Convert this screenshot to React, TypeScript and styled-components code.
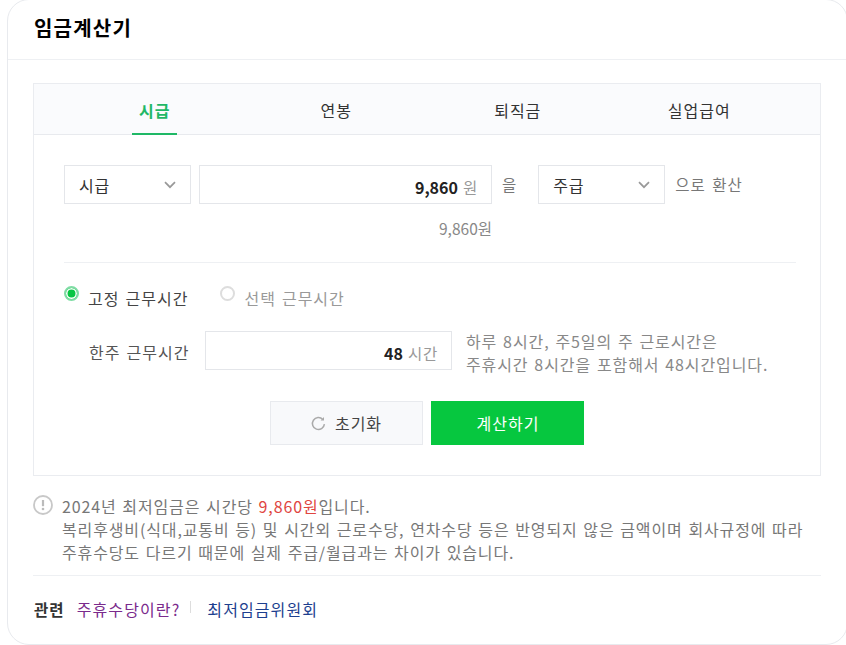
import styled, { createGlobalStyle } from 'styled-components';

const GlobalStyle = createGlobalStyle`
  html, body {
    margin: 0;
    padding: 0;
    background: #fff;
    overflow: hidden;
  }
  body {
    font-family: "Noto Sans CJK KR", "Noto Sans", sans-serif;
    font-size: 16px;
    color: #333;
  }
`;

const Card = styled.section`
  box-sizing: border-box;
  width: 841px;
  height: 646px;
  margin-left: 7px;
  margin-top: -1px;
  border: 1px solid #e8eaee;
  border-radius: 22px;
  background: #fff;
`;

const Header = styled.header`
  box-sizing: border-box;
  height: 60px;
  padding: 13px 26px 0;
  border-bottom: 1px solid #eef0f3;
`;

const Title = styled.h2`
  margin: 0;
  font-size: 20px;
  line-height: 30px;
  font-weight: 700;
  letter-spacing: 1.2px;
  color: #000;
`;

const Body = styled.div`
  padding: 23px 26px 0 25px;
`;

const Calc = styled.div`
  box-sizing: border-box;
  width: 788px;
  height: 393px;
  border: 1px solid #eaecf0;
`;

const Tabs = styled.div`
  display: grid;
  grid-template-columns: repeat(4, 181.5px);
  height: 51px;
  box-sizing: border-box;
  padding: 0 30px;
  background: #fafbfd;
  border-bottom: 1px solid #e8eaee;
`;

const Tab = styled.div`
  display: flex;
  justify-content: center;
`;

const TabLabel = styled.span<{ $active?: boolean }>`
  box-sizing: border-box;
  height: 51px;
  padding: 0 7px;
  min-width: 44px;
  text-align: center;
  line-height: 52px;
  font-size: 16px;
  letter-spacing: 1px;
  font-weight: ${(p) => (p.$active ? 700 : 400)};
  color: ${(p) => (p.$active ? '#1fb866' : '#333')};
  border-bottom: 2px solid ${(p) => (p.$active ? '#1fb866' : 'transparent')};
`;

const Panel = styled.div`
  padding: 30px 24px 0 30px;
`;

const ConvertRow = styled.div`
  display: flex;
  align-items: center;
  height: 39px;
`;

const Select = styled.div<{ $width: number; $gap?: number }>`
  box-sizing: border-box;
  display: flex;
  align-items: center;
  justify-content: space-between;
  width: ${(p) => p.$width}px;
  height: 39px;
  margin-right: ${(p) => p.$gap ?? 0}px;
  padding: 0 14px 0 14px;
  border: 1px solid #e4e6ea;
  font-size: 16px;
  letter-spacing: 0.8px;
  color: #333;
`;

const Field = styled.div<{ $width: number }>`
  box-sizing: border-box;
  display: flex;
  align-items: center;
  justify-content: flex-end;
  width: ${(p) => p.$width}px;
  height: 39px;
  padding: 5px 13px 0 0;
  border: 1px solid #e4e6ea;
`;

const Amount = styled.strong`
  font-size: 16px;
  font-weight: 700;
  color: #222;
`;

const Unit = styled.span`
  margin-left: 5px;
  font-size: 15.5px;
  letter-spacing: 0.8px;
  color: #999;
`;

const RowText = styled.span<{ $gap: number }>`
  margin: 0 ${(p) => p.$gap}px 0 10px;
  font-size: 15.5px;
  letter-spacing: 1px;
  word-spacing: 2px;
  color: #777;
  padding-bottom: 1px;
  white-space: nowrap;
`;

const Converted = styled.div`
  box-sizing: border-box;
  width: 428px;
  margin-top: 12px;
  text-align: right;
  font-size: 15.5px;
  line-height: 24px;
  color: #888;
`;

const Divider = styled.hr`
  margin: 22px 0 0;
  border: 0;
  border-top: 1px solid #eef0f3;
`;

const RadioRow = styled.div`
  display: flex;
  align-items: center;
  gap: 32px;
  margin-top: 20px;
  height: 30px;
`;

const RadioItem = styled.label<{ $on?: boolean }>`
  display: flex;
  align-items: center;
  gap: 9px;
  font-size: 16px;
  letter-spacing: 1px;
  word-spacing: 1.5px;
  color: ${(p) => (p.$on ? '#444' : '#999')};
`;

const RadioDot = styled.span<{ $on?: boolean }>`
  box-sizing: border-box;
  display: block;
  width: 15px;
  height: 15px;
  margin-top: -10px;
  border-radius: 50%;
  border: ${(p) => (p.$on ? '2px solid #7fdca4' : '2px solid #ddd')};
  background: ${(p) => (p.$on ? '#08c544' : '#fff')};
  box-shadow: ${(p) => (p.$on ? 'inset 0 0 0 1.5px #fff' : 'none')};
`;

const HoursRow = styled.div`
  display: flex;
  align-items: center;
  margin-top: 15px;
  height: 45px;
`;

const HoursLabel = styled.span`
  width: 141px;
  padding: 2px 0 0 25px;
  box-sizing: border-box;
  font-size: 16px;
  letter-spacing: 1px;
  word-spacing: 1.5px;
  color: #555;
  white-space: nowrap;
`;

const HoursHint = styled.p`
  margin: 0 0 0 14px;
  padding-top: 4px;
  font-size: 16px;
  line-height: 23px;
  letter-spacing: 0.9px;
  word-spacing: 1.4px;
  color: #888;
  white-space: nowrap;
`;

const Buttons = styled.div`
  display: flex;
  justify-content: center;
  gap: 8px;
  margin-top: 28px;
  padding-right: 6px;
`;

const Reset = styled.button`
  display: flex;
  align-items: center;
  justify-content: center;
  gap: 9px;
  width: 153px;
  height: 44px;
  padding: 0;
  border: 1px solid #e8eaee;
  background: #f8f9fb;
  font: inherit;
  letter-spacing: 1px;
  color: #444;
`;

const Submit = styled.button`
  width: 153px;
  height: 44px;
  padding: 0 0 0 1px;
  border: 0;
  background: #06c73f;
  font: inherit;
  letter-spacing: 1px;
  color: #fff;
`;

const Notice = styled.div`
  display: flex;
  gap: 9px;
  margin-top: 19px;
`;

const NoticeText = styled.p`
  margin: 0;
  font-size: 16px;
  line-height: 23px;
  letter-spacing: 0.87px;
  word-spacing: 1.3px;
  color: #777;
  white-space: nowrap;
`;

const Red = styled.span`
  color: #e0453f;
`;

const Related = styled.div`
  display: flex;
  align-items: center;
  margin-top: 11px;
  padding-top: 21px;
  border-top: 1px solid #eef0f3;
  line-height: 24px;
  font-size: 16px;
  letter-spacing: 1.1px;
`;

const RelatedLabel = styled.strong`
  margin: 0 12px 0 1px;
  font-size: 15.5px;
  font-weight: 700;
  color: #333;
`;

const RelatedLink = styled.a<{ $visited?: boolean }>`
  color: ${(p) => (p.$visited ? '#7a2a8c' : '#1d3f8f')};
  text-decoration: none;
`;

const Sep = styled.span`
  width: 1px;
  height: 12px;
  margin: -4px 16px 0 10px;
  background: #ddd;
`;

const InfoSvg = styled.svg`
  flex: none;
`;

const Chevron = () => (
  <svg width="12" height="8" viewBox="0 0 12 8" fill="none">
    <path d="M1 1.2 6 6.2 11 1.2" stroke="#999" strokeWidth="1.7" />
  </svg>
);

const ResetIcon = () => (
  <svg width="15" height="15" viewBox="0 0 15 15" fill="none">
    <path d="M11.8 3.4A6 6 0 1 0 13.4 8.2" stroke="#aaa" strokeWidth="1.5" />
    <path d="M9.6 4.4 13 4.6 13 1Z" fill="#aaa" />
  </svg>
);

const InfoIcon = () => (
  <InfoSvg width="20" height="20" viewBox="0 0 20 20" fill="none">
    <circle cx="10" cy="10" r="9" stroke="#c8c8c8" strokeWidth="1.8" />
    <path d="M10 5v6.2" stroke="#bbb" strokeWidth="2.2" />
    <circle cx="10" cy="14" r="1.3" fill="#bbb" />
  </InfoSvg>
);

export default function App() {
  return (
    <>
      <GlobalStyle />
      <Card>
        <Header>
          <Title>임금계산기</Title>
        </Header>
        <Body>
          <Calc>
            <Tabs>
              <Tab><TabLabel $active>시급</TabLabel></Tab>
              <Tab><TabLabel>연봉</TabLabel></Tab>
              <Tab><TabLabel>퇴직금</TabLabel></Tab>
              <Tab><TabLabel>실업급여</TabLabel></Tab>
            </Tabs>
            <Panel>
              <ConvertRow>
                <Select $width={127} $gap={8}>시급<Chevron /></Select>
                <Field $width={293}>
                  <Amount>9,860</Amount>
                  <Unit>원</Unit>
                </Field>
                <RowText $gap={21}>을</RowText>
                <Select $width={127}>주급<Chevron /></Select>
                <RowText $gap={0}>으로 환산</RowText>
              </ConvertRow>
              <Converted>9,860원</Converted>
              <Divider />
              <RadioRow>
                <RadioItem $on><RadioDot $on />고정 근무시간</RadioItem>
                <RadioItem><RadioDot />선택 근무시간</RadioItem>
              </RadioRow>
              <HoursRow>
                <HoursLabel>한주 근무시간</HoursLabel>
                <Field $width={247}>
                  <Amount>48</Amount>
                  <Unit>시간</Unit>
                </Field>
                <HoursHint>
                  하루 8시간, 주5일의 주 근로시간은
                  <br />
                  주휴시간 8시간을 포함해서 48시간입니다.
                </HoursHint>
              </HoursRow>
              <Buttons>
                <Reset><ResetIcon />초기화</Reset>
                <Submit>계산하기</Submit>
              </Buttons>
            </Panel>
          </Calc>
          <Notice>
            <InfoIcon />
            <NoticeText>
              2024년 최저임금은 시간당 <Red>9,860원</Red>입니다.
              <br />
              복리후생비(식대,교통비 등) 및 시간외 근로수당, 연차수당 등은 반영되지 않은 금액이며 회사규정에 따라
              <br />
              주휴수당도 다르기 때문에 실제 주급/월급과는 차이가 있습니다.
            </NoticeText>
          </Notice>
          <Related>
            <RelatedLabel>관련</RelatedLabel>
            <RelatedLink $visited>주휴수당이란?</RelatedLink>
            <Sep />
            <RelatedLink>최저임금위원회</RelatedLink>
          </Related>
        </Body>
      </Card>
    </>
  );
}
